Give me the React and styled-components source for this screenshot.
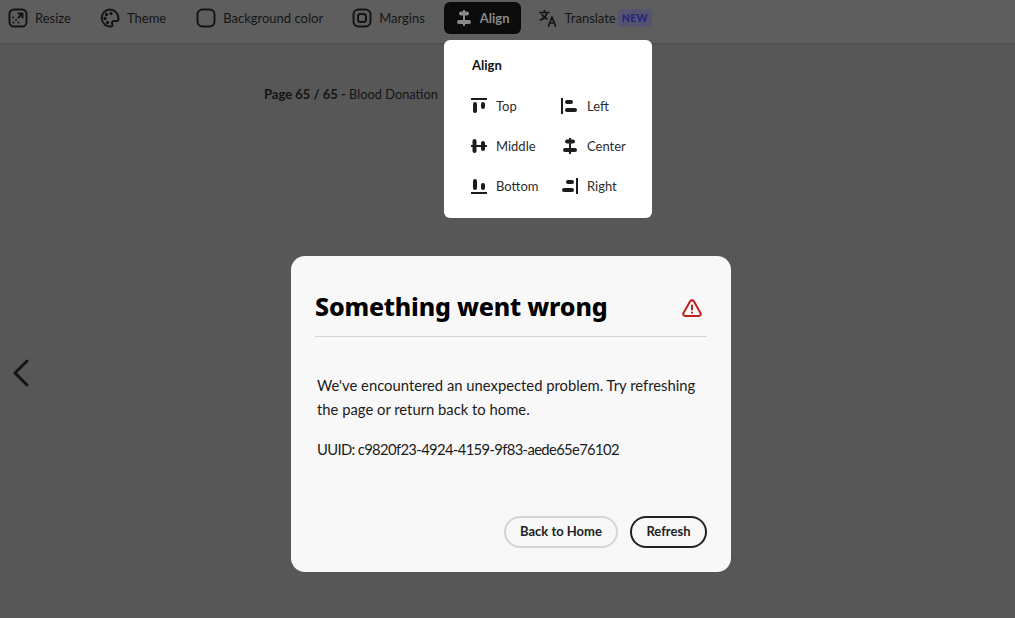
import styled, { createGlobalStyle } from "styled-components";

const Global = createGlobalStyle`
  html, body { margin: 0; padding: 0; height: 100%; }
  body { background: #575757; font-family: "Lato", "Noto Sans", sans-serif; overflow: hidden; }
  * { box-sizing: border-box; }
`;

const Page = styled.div`
  position: relative;
  width: 1015px;
  height: 618px;
  overflow: hidden;
  background: #575757;
`;

const Toolbar = styled.div`
  display: flex;
  align-items: flex-start;
  height: 43px;
  padding: 2px 0 0 8px;
  background: #5e5e5e;
  box-shadow: 0 1px 2px rgba(0, 0, 0, 0.08);
`;

const ToolButton = styled.div`
  display: flex;
  align-items: center;
  gap: ${(p) => p.$gap || 7}px;
  height: 32px;
  margin-left: ${(p) => p.$left || 0}px;
  padding: ${(p) => (p.$active ? "0 11px 0 11px" : "0")};
  border-radius: 6px;
  background: ${(p) => (p.$active ? "#0b0b0b" : "transparent")};
  color: ${(p) => (p.$active ? "#8a8a8a" : "#151515")};
  font-size: 13px;
  font-weight: ${(p) => (p.$active ? 700 : 400)};
  svg { display: block; flex: none; }
`;

const NewBadge = styled.span`
  margin-left: -6px;
  padding: 0 4px;
  height: 18px;
  line-height: 18px;
  border-radius: 3px;
  background: #54546e;
  color: #24247c;
  font-size: 10.5px;
  font-weight: 900;
  letter-spacing: 0.3px;
`;

const PageLabel = styled.div`
  padding: 43px 0 0 264px;
  color: #141414;
  font-size: 12.8px;
  line-height: 17px;
  b { font-size: 13px; font-weight: 700; }
`;

const Popover = styled.div`
  position: absolute;
  left: 444px;
  top: 40px;
  width: 208px;
  height: 178px;
  padding: 17px 0 0 26px;
  background: #fff;
  border-radius: 6px;
  color: #222;
`;

const PopoverTitle = styled.div`
  margin-left: 2px;
  font-size: 13px;
  line-height: 17px;
  font-weight: 700;
  color: #111;
`;

const AlignGrid = styled.div`
  display: grid;
  grid-template-columns: 91px 80px;
  grid-auto-rows: 40px;
  margin-top: 12px;
`;

const AlignItem = styled.div`
  display: flex;
  align-items: center;
  gap: 8px;
  font-size: 13px;
  color: #2c2c2c;
  svg { display: block; flex: none; }
`;

const Arrow = styled.div`
  position: absolute;
  left: 12px;
  top: 358px;
  svg { display: block; }
`;

const Dialog = styled.div`
  position: absolute;
  left: 291px;
  top: 256px;
  width: 440px;
  height: 316px;
  padding: 32px 24px 24px;
  background: #f8f8f8;
  border-radius: 14px;
  display: flex;
  flex-direction: column;
`;

const DialogHeader = styled.div`
  display: flex;
  align-items: center;
  justify-content: space-between;
  height: 49px;
  padding: 0 5px 12px 0;
  border-bottom: 1px solid #d5d5d5;
  svg { margin-top: 4px; }
`;

const Heading = styled.h1`
  margin: 0;
  font-family: "Noto Sans", sans-serif;
  font-size: 25px;
  font-weight: 800;
  line-height: 36px;
  color: #000;
  letter-spacing: -0.2px;
`;

const DialogBody = styled.div`
  flex: 1;
  padding: 36px 2px 0;
  color: #1b1b1b;
  font-size: 14.8px;
  line-height: 24px;
  p { margin: 0 0 16px; }
`;

const Uuid = styled.p`
  letter-spacing: -0.65px;
`;

const DialogFooter = styled.div`
  display: flex;
  justify-content: flex-end;
  gap: 12px;
`;

const Pill = styled.div`
  display: flex;
  align-items: center;
  justify-content: center;
  height: 32px;
  padding: 0 ${(p) => (p.$primary ? 14.5 : 14)}px 2px;
  border-radius: 16px;
  border: 2px solid ${(p) => (p.$primary ? "#222" : "#d5d5d5")};
  font-size: 13px;
  font-weight: 700;
  color: #222;
`;

const AlignIcon = ({ kind }) => {
  const shapes = {
    top: (
      <>
        <rect x="1" y="1" width="16" height="2" />
        <rect x="3" y="5" width="4" height="11" rx="2" />
        <rect x="11" y="5" width="4" height="7" rx="2" />
      </>
    ),
    left: (
      <>
        <rect x="0" y="1" width="2" height="16" />
        <rect x="4" y="3" width="8" height="4" rx="2" />
        <rect x="4" y="11" width="12" height="4" rx="2" />
      </>
    ),
    middle: (
      <>
        <rect x="1" y="8" width="16" height="2" />
        <rect x="2.5" y="2" width="4" height="14" rx="2" />
        <rect x="11" y="4" width="4" height="10" rx="2" />
      </>
    ),
    center: (
      <>
        <rect x="8" y="1" width="2" height="16" />
        <rect x="4" y="2.5" width="10" height="4" rx="2" />
        <rect x="2" y="11" width="14" height="4" rx="2" />
      </>
    ),
    bottom: (
      <>
        <rect x="1" y="15" width="16" height="2" />
        <rect x="3" y="2" width="4" height="11" rx="2" />
        <rect x="11" y="6" width="4" height="7" rx="2" />
      </>
    ),
    right: (
      <>
        <rect x="15" y="1" width="2" height="16" />
        <rect x="5" y="3" width="8" height="4" rx="2" />
        <rect x="1" y="11" width="12" height="4" rx="2" />
      </>
    ),
  };
  return (
    <svg width="18" height="18" viewBox="0 0 18 18" fill={kind === "toolbar" ? "#8a8a8a" : "#1c1c1c"}>
      {shapes[kind === "toolbar" ? "center" : kind]}
    </svg>
  );
};

const ResizeIcon = () => (
  <svg width="20" height="20" viewBox="0 0 20 20" fill="none" stroke="#141414" strokeWidth="2" strokeLinecap="round" strokeLinejoin="round">
    <rect x="1.5" y="1.5" width="17" height="17" rx="4.5" />
    <path d="M10.5 9.5 14.500 5.500M10.500 5.500h4v4" />
    <path d="M8 12v.01M5 9.500v.01M5.500 14.500v.01M10.500 14.500v.01" />
  </svg>
);

const ThemeIcon = () => (
  <svg width="20" height="20" viewBox="0 0 20 20" fill="none" stroke="#141414" strokeWidth="2" strokeLinecap="round" strokeLinejoin="round">
    <path d="M10 1.500a8.500 8.500 0 1 0 1.500 16.900c1.300-.3 1-1.500.6-2.500-.6-1.500.3-2.900 1.900-2.900h2.300c1.600 0 2.200-1 2.200-2.500C18.500 5.500 14.700 1.500 10 1.500Z" />
    <circle cx="6.500" cy="6.500" r=".7" fill="#141414" />
    <circle cx="11" cy="5.500" r=".7" fill="#141414" />
    <circle cx="5" cy="10.500" r=".7" fill="#141414" />
    <circle cx="7.500" cy="14.500" r=".7" fill="#141414" />
  </svg>
);

const SquareIcon = () => (
  <svg width="20" height="20" viewBox="0 0 20 20" fill="none" stroke="#141414" strokeWidth="2">
    <rect x="1.500" y="1.500" width="17" height="17" rx="5" />
  </svg>
);

const MarginsIcon = () => (
  <svg width="20" height="20" viewBox="0 0 20 20" fill="none" stroke="#141414" strokeWidth="2">
    <rect x="1.500" y="1.500" width="17" height="17" rx="5" />
    <rect x="6" y="6" width="8" height="8" rx="2.500" />
  </svg>
);

const TranslateIcon = () => (
  <svg width="18" height="18" viewBox="0 0 18 18" fill="none" stroke="#141414" strokeWidth="1.700" strokeLinecap="round" strokeLinejoin="round">
    <path d="M1 3.500h9M5.500 1.500v2M8 3.500c-.6 3.500-3 6-6.500 7.500M3 5.500c1 2 2.500 3.500 5 4.500" />
    <path d="M9.500 17l3.500-9 3.500 9M10.700 14h4.600" />
  </svg>
);

const WarningIcon = () => (
  <svg width="20" height="18" viewBox="0 0 20 18" fill="none" stroke="#c1201c" strokeWidth="2" strokeLinejoin="round" strokeLinecap="round">
    <path d="M8.300 2.100 1.500 14a1.900 1.900 0 0 0 1.700 2.900h13.600a1.900 1.900 0 0 0 1.700-2.900L11.700 2.100a2 2 0 0 0-3.400 0Z" />
    <path d="M10 6.500v4M10 13.600v.1" />
  </svg>
);

export default function App() {
  return (
    <Page>
      <Global />
      <Toolbar>
        <ToolButton><ResizeIcon />Resize</ToolButton>
        <ToolButton $left={29}><ThemeIcon />Theme</ToolButton>
        <ToolButton $left={30}><SquareIcon />Background color</ToolButton>
        <ToolButton $left={29}><MarginsIcon />Margins</ToolButton>
        <ToolButton $left={19} $active><AlignIcon kind="toolbar" />Align</ToolButton>
        <ToolButton $left={18} $gap={8}><TranslateIcon />Translate<NewBadge>NEW</NewBadge></ToolButton>
      </Toolbar>
      <PageLabel><b>Page 65 / 65 -</b> Blood Donation</PageLabel>
      <Arrow>
        <svg width="18" height="30" viewBox="0 0 18 30" fill="none" stroke="#141414" strokeWidth="3" strokeLinecap="round" strokeLinejoin="round">
          <path d="M15 3 3 15l12 12" />
        </svg>
      </Arrow>
      <Popover>
        <PopoverTitle>Align</PopoverTitle>
        <AlignGrid>
          <AlignItem><AlignIcon kind="top" />Top</AlignItem>
          <AlignItem><AlignIcon kind="left" />Left</AlignItem>
          <AlignItem><AlignIcon kind="middle" />Middle</AlignItem>
          <AlignItem><AlignIcon kind="center" />Center</AlignItem>
          <AlignItem><AlignIcon kind="bottom" />Bottom</AlignItem>
          <AlignItem><AlignIcon kind="right" />Right</AlignItem>
        </AlignGrid>
      </Popover>
      <Dialog>
        <DialogHeader>
          <Heading>Something went wrong</Heading>
          <WarningIcon />
        </DialogHeader>
        <DialogBody>
          <p>We've encountered an unexpected problem. Try refreshing the page or return back to home.</p>
          <Uuid>UUID: c9820f23-4924-4159-9f83-aede65e76102</Uuid>
        </DialogBody>
        <DialogFooter>
          <Pill>Back to Home</Pill>
          <Pill $primary>Refresh</Pill>
        </DialogFooter>
      </Dialog>
    </Page>
  );
}
